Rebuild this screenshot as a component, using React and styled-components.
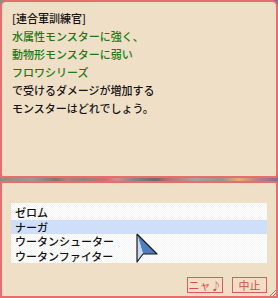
import React from 'react';
import styled, { createGlobalStyle } from 'styled-components';

const GlobalStyle = createGlobalStyle`
    html, body {
        margin: 0;
        padding: 0;
        background: #8c8a82;
    }
    * {
        box-sizing: border-box;
    }
`;

const Frame = styled.div`
    width: 278px;
    height: 298px;
    display: flex;
    flex-direction: column;
    gap: 3px;
    background: linear-gradient(90deg,
        #8e8c84 0%, #a09890 12%, #7c7870 20%, #b8807a 24%, #8a8680 30%,
        #d86a74 38%, #e08890 42%, #8a8680 48%, #6e6a66 56%, #c06a72 60%,
        #a8a49c 70%, #98948c 80%, #e8b070 86%, #c08080 92%, #7a70a0 100%);
    font-family: "Noto Sans CJK JP", "DejaVu Sans", sans-serif;
    font-size: 11px;
`;

const Panel = styled.div`
    background-color: #f0dfc7;
    border: 2px solid #e86e6e;
`;

const MessagePanel = styled(Panel)`
    height: 178px;
    border-radius: 6px 6px 3px 3px;
    padding: 7px 10px;
`;

const Line = styled.div`
    line-height: 18px;
    font-weight: 500;
    color: ${p => (p.$green ? '#1e7a14' : '#141414')};
    white-space: nowrap;
`;

const ChoicePanel = styled(Panel)`
    height: 117px;
    border-radius: 3px 3px 0 0;
    padding: 20px 9px 3px 9px;
    display: flex;
    flex-direction: column;
    position: relative;
`;

const List = styled.div`
    height: 60px;
    overflow: hidden;
    padding-top: 2px;
    background-color: #ffffff;
    background-image: repeating-conic-gradient(#f3f3f3 0 25%, #ffffff 0 50%);
    background-size: 2px 2px;
`;

const Row = styled.div`
    height: 14.5px;
    line-height: 14px;
    padding-left: 4px;
    font-weight: 500;
    color: #111;
    background: ${p => (p.$selected ? '#cfdffa' : 'transparent')};
    white-space: nowrap;
`;

const ButtonRow = styled.div`
    display: flex;
    justify-content: flex-end;
    gap: 9px;
    margin-top: 14px;
`;

const Button = styled.div`
    height: 16px;
    width: ${p => p.$w}px;
    border: 1px solid #e25a5a;
    color: #d84c4c;
    display: flex;
    align-items: center;
    justify-content: center;
    font-size: 11px;
    line-height: 14px;
    white-space: nowrap;
`;

const Cursor = styled.svg`
    position: absolute;
    left: 134px;
    top: 49px;
`;

const Grip = styled.svg`
    position: absolute;
    right: 0;
    bottom: 0;
`;

const choices = ['ゼロム', 'ナーガ', 'ウータンシューター', 'ウータンファイター'];

function App() {
    return (
        <>
            <GlobalStyle />
            <Frame>
                <MessagePanel>
                    <Line>[連合軍訓練官]</Line>
                    <Line $green>水属性モンスターに強く、</Line>
                    <Line $green>動物形モンスターに弱い</Line>
                    <Line $green>フロワシリーズ</Line>
                    <Line>で受けるダメージが増加する</Line>
                    <Line>モンスターはどれでしょう。</Line>
                </MessagePanel>
                <ChoicePanel>
                    <List>
                        {choices.map((c, i) => (
                            <Row key={c} $selected={i === 1}>{c}</Row>
                        ))}
                    </List>
                    <ButtonRow>
                        <Button $w={36}>ニャ♪</Button>
                        <Button $w={35}>中止</Button>
                    </ButtonRow>
                    <Cursor width="24" height="32" viewBox="0 0 24 32">
                        <polygon points="1,2 21,22 7,22" fill="#4f7fbf" />
                        <polygon points="1,2 7,22 1,30" fill="#e8f0fb" />
                        <polygon points="1,2 4,12 7,22 1,30" fill="#a9c4e8" opacity="0.5" />
                        <polyline points="1,2 1,30 7,22 21,22 1,2" fill="none" stroke="#1a1a1a" strokeWidth="1.2" strokeLinejoin="round" />
                    </Cursor>
                    <Grip width="8" height="8" viewBox="0 0 8 8">
                        <line x1="2" y1="8" x2="8" y2="2" stroke="#b07070" />
                        <line x1="5" y1="8" x2="8" y2="5" stroke="#b07070" />
                    </Grip>
                </ChoicePanel>
            </Frame>
        </>
    );
}

export default App;
